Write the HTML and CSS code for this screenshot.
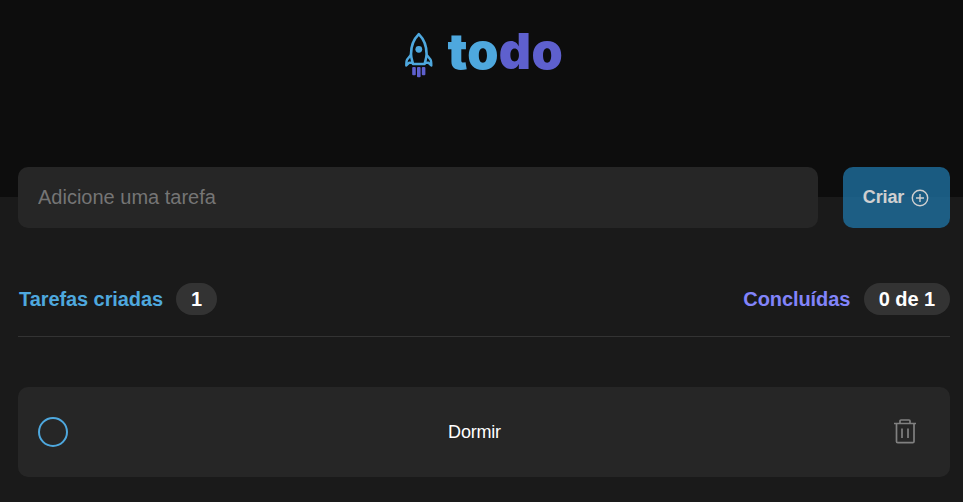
FILE: index.html
```html
<!DOCTYPE html>
<html lang="pt-BR">
<head>
<meta charset="utf-8">
<title>todo</title>
<link rel="stylesheet" href="styles.css">
</head>
<body>
<header class="header">
  <div class="logo">
    <svg class="rocket" width="28" height="46" viewBox="0 0 28 46" fill="none">
      <path d="M8 32C7.500 29 6 26.500 6 22C6 14 9.500 6.500 13.800 2.200C18.100 6.500 21.600 14 21.600 22C21.600 26.500 20.100 29 19.600 32Z" stroke="#4EA8DE" stroke-width="2.600" stroke-linejoin="round"/>
      <path d="M5.800 23L2 27.800Q1.300 29 1.300 33.500L4 30.800L7.300 30.700M21.800 23L25.600 27.800Q26.300 29 26.300 33.500L23.600 30.800L20.300 30.700" stroke="#4EA8DE" stroke-width="2.400" stroke-linejoin="round"/>
      <circle cx="13.800" cy="17.300" r="3.400" fill="#4EA8DE"/>
      <rect x="7.200" y="35" width="3.600" height="8.200" rx="1" fill="#5E60CE"/>
      <rect x="12" y="35" width="3.600" height="10.200" rx="1" fill="#5E60CE"/>
      <rect x="16.800" y="35" width="3.600" height="8.200" rx="1" fill="#5E60CE"/>
    </svg>
    <span class="wordmark"><span class="wordmark-to">to</span><span class="wordmark-do">do</span></span>
  </div>
</header>
<main class="content">
  <form class="new-task">
    <input class="task-input" type="text" placeholder="Adicione uma tarefa">
    <button class="create" type="button">Criar
      <svg width="18" height="18" viewBox="0 0 18 18" fill="none" stroke="currentColor" stroke-width="1.400"><circle cx="9" cy="9" r="7.700"/><path d="M9 5v8M5 9h8"/></svg>
    </button>
  </form>
  <div class="summary">
    <div class="count created">Tarefas criadas <span class="badge">1</span></div>
    <div class="count done">Concluídas <span class="badge">0 de 1</span></div>
  </div>
  <div class="task">
    <span class="check"></span>
    <p class="task-text">Dormir</p>
    <svg class="trash" width="24" height="26" viewBox="0 0 24 26" fill="none" stroke="#808080" stroke-width="1.700">
      <path d="M1 4.500h22M7 4.500V2Q7 1 8 1H16Q17 1 17 2V4.500M3.500 4.500V22.500Q3.500 23.700 4.700 23.700H19.800Q21 23.700 21 22.500V4.500M9 9.500v9.500M15 9.500v9.500"/>
    </svg>
  </div>
</main>
</body>
</html>
```
FILE: styles.css
```css
* { box-sizing: border-box; margin: 0; }

body {
  background: #1a1a1a;
  color: #fff;
  font-family: "Liberation Sans", Arial, sans-serif;
}

.header {
  height: 197px;
  padding-top: 22px;
  background: #0d0d0d;
}

.logo {
  display: flex;
  justify-content: center;
  gap: 15px;
  height: 60px;
  padding-left: 4px;
}

.rocket { margin-top: 10px; }

.wordmark {
  width: 115px;
  font: 900 50px/58px Inter, sans-serif;
  letter-spacing: 0.3px;
}

.wordmark-to { color: #4ea8de; }
.wordmark-do { color: #5e60ce; }

.content {
  margin-top: -30px;
  padding: 0 13px 0 18px;
}

.new-task {
  display: flex;
  gap: 25px;
  height: 61px;
}

.task-input {
  flex: 1;
  min-width: 0;
  padding: 0 20px;
  border: 0;
  border-radius: 10px;
  background: #262626;
  color: #fff;
  font: 20px "Liberation Sans", Arial, sans-serif;
}

.task-input::placeholder { color: #757575; }

.create {
  display: flex;
  align-items: center;
  justify-content: center;
  gap: 7px;
  width: 107px;
  padding: 0 1px 0 0;
  border: 0;
  border-radius: 10px;
  background: #1e6f9f;
  color: #fff;
  font: bold 18px "Liberation Sans", Arial, sans-serif;
  letter-spacing: -0.1px;
  opacity: 0.8;
}

.create svg { margin-top: 1px; }

.summary {
  display: flex;
  justify-content: space-between;
  height: 54px;
  margin-top: 55px;
  border-bottom: 1px solid #333;
}

.count {
  display: flex;
  gap: 13px;
  height: 32px;
  font-size: 20px;
  font-weight: bold;
  line-height: 32px;
  letter-spacing: -0.08px;
}

.created { padding-left: 1px; color: #4ea8de; }
.done { gap: 14px; color: #8284fa; }

.badge {
  padding: 0 15px;
  border-radius: 16px;
  background: #333;
  color: #fff;
}

.done .badge { padding: 0 15px 0 14.5px; }

.task {
  display: flex;
  align-items: center;
  height: 90px;
  margin-top: 50px;
  padding: 0 33px 0 20px;
  border-radius: 10px;
  background: #262626;
}

.check {
  width: 30px;
  height: 30px;
  border: 2px solid #4ea8de;
  border-radius: 50%;
}

.task-text {
  flex: 1;
  padding-right: 12px;
  text-align: center;
  font-size: 18px;
  letter-spacing: -0.2px;
}
```
